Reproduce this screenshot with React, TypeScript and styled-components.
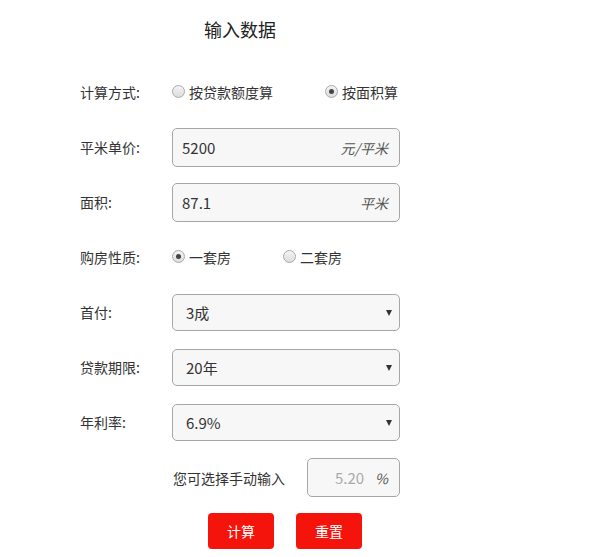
import styled, { createGlobalStyle } from 'styled-components'

const GlobalStyle = createGlobalStyle`
    body {
        margin: 0;
        background: #fff;
        font-family: "Noto Sans CJK SC", "Noto Sans", sans-serif;
        color: #333;
    }
`

const Page = styled.div`
    width: 320px;
    padding: 18px 0 0 80px;
`

const Title = styled.h2`
    margin: 0 0 31px;
    font-size: 18px;
    line-height: 22px;
    padding-bottom: 2px;
    font-weight: normal;
    text-align: center;
    color: #222;
`

const Form = styled.form`
    display: flex;
    flex-direction: column;
    gap: 16px;
`

const Row = styled.div`
    display: flex;
    align-items: center;
    height: 39px;
`

const Label = styled.div`
    flex-shrink: 0;
    width: 92px;
    font-size: 14px;
    line-height: 18px;
    padding-bottom: 2px;
    color: #333;
`

const Field = styled.div<{ $end?: boolean }>`
    display: flex;
    align-items: center;
    width: 228px;
    justify-content: ${p => (p.$end ? 'flex-end' : 'flex-start')};
    gap: ${p => (p.$end ? '22px' : '0')};
`

const RadioGroup = styled.div`
    display: flex;
    align-items: center;
    gap: 52px;
    white-space: nowrap;
`

const RadioOption = styled.label`
    display: flex;
    flex-shrink: 0;
    align-items: center;
    gap: 4px;
    font-size: 14px;
    line-height: 18px;
    padding-bottom: 2px;
    cursor: pointer;
`

const RadioDot = styled.span<{ $checked?: boolean }>`
    position: relative;
    flex-shrink: 0;
    width: 11px;
    height: 11px;
    border-radius: 50%;
    border: 1px solid #a9a9a9;
    background: linear-gradient(#f4f4f4, #dcdcdc);

    &::after {
        content: '';
        display: ${p => (p.$checked ? 'block' : 'none')};
        position: absolute;
        left: 3px;
        top: 3px;
        width: 5px;
        height: 5px;
        border-radius: 50%;
        background: #444;
    }
`

const InputBox = styled.div<{ $width?: number }>`
    display: flex;
    align-items: center;
    box-sizing: border-box;
    flex-shrink: 0;
    width: ${p => (p.$width ? `${p.$width}px` : '100%')};
    height: 39px;
    padding: 0 11px 0 9px;
    border: 1px solid #a6a6a6;
    border-radius: 5px;
    background: #f7f7f7;
`

const TextInput = styled.input<{ $right?: boolean }>`
    flex: 1;
    min-width: 0;
    border: none;
    outline: none;
    background: transparent;
    padding: 0;
    font-family: inherit;
    font-size: 15px;
    color: ${p => (p.$right ? '#aaa' : '#333')};
    text-align: ${p => (p.$right ? 'right' : 'left')};
`

const Unit = styled.span<{ $gap?: number }>`
    margin-left: ${p => p.$gap ?? 8}px;
    font-size: 14px;
    font-style: italic;
    color: #555;
`

const SelectWrap = styled.div`
    position: relative;
    width: 100%;
    height: 37px;
`

const Select = styled.select`
    appearance: none;
    box-sizing: border-box;
    width: 100%;
    height: 100%;
    padding: 0 28px 0 13px;
    border: 1px solid #a6a6a6;
    border-radius: 5px;
    background: #f7f7f7;
    font-family: inherit;
    font-size: 15px;
    color: #333;
    outline: none;
`

const Arrow = styled.span`
    position: absolute;
    right: 8px;
    top: 16px;
    width: 0;
    height: 0;
    border-left: 3.5px solid transparent;
    border-right: 3.5px solid transparent;
    border-top: 6px solid #333;
    pointer-events: none;
`

const Hint = styled.span`
    font-size: 14px;
    white-space: nowrap;
    color: #333;
`

const Buttons = styled.div`
    display: flex;
    gap: 22px;
    margin-left: 128px;
`

const Button = styled.button`
    width: 66px;
    height: 36px;
    border: none;
    border-radius: 4px;
    background: #f5140b;
    color: #fff;
    font-family: inherit;
    font-size: 14px;
    cursor: pointer;
`

const Radio = ({ text, checked }: { text: string; checked?: boolean }) => (
    <RadioOption>
        <RadioDot $checked={checked} />
        {text}
    </RadioOption>
)

const SelectField = ({ value, options }: { value: string; options: string[] }) => (
    <SelectWrap>
        <Select defaultValue={value}>
            {options.map(o => (
                <option key={o} value={o}>{o}</option>
            ))}
        </Select>
        <Arrow />
    </SelectWrap>
)

const App = () => {
    return (
        <Page>
            <GlobalStyle />
            <Title>输入数据</Title>
            <Form onSubmit={e => e.preventDefault()}>
                <Row>
                    <Label>计算方式:</Label>
                    <Field>
                        <RadioGroup>
                            <Radio text="按贷款额度算" />
                            <Radio text="按面积算" checked />
                        </RadioGroup>
                    </Field>
                </Row>
                <Row>
                    <Label>平米单价:</Label>
                    <Field>
                        <InputBox>
                            <TextInput defaultValue="5200" />
                            <Unit>元/平米</Unit>
                        </InputBox>
                    </Field>
                </Row>
                <Row>
                    <Label>面积:</Label>
                    <Field>
                        <InputBox>
                            <TextInput defaultValue="87.1" />
                            <Unit>平米</Unit>
                        </InputBox>
                    </Field>
                </Row>
                <Row>
                    <Label>购房性质:</Label>
                    <Field>
                        <RadioGroup>
                            <Radio text="一套房" checked />
                            <Radio text="二套房" />
                        </RadioGroup>
                    </Field>
                </Row>
                <Row>
                    <Label>首付:</Label>
                    <Field>
                        <SelectField value="3成" options={['2成', '3成', '4成', '5成']} />
                    </Field>
                </Row>
                <Row>
                    <Label>贷款期限:</Label>
                    <Field>
                        <SelectField value="20年" options={['10年', '15年', '20年', '30年']} />
                    </Field>
                </Row>
                <Row>
                    <Label>年利率:</Label>
                    <Field>
                        <SelectField value="6.9%" options={['4.9%', '5.88%', '6.9%']} />
                    </Field>
                </Row>
                <Row>
                    <Label />
                    <Field $end>
                        <Hint>您可选择手动输入</Hint>
                        <InputBox $width={93}>
                            <TextInput $right defaultValue="5.20" />
                            <Unit $gap={11}>%</Unit>
                        </InputBox>
                    </Field>
                </Row>
                <Buttons>
                    <Button type="submit">计算</Button>
                    <Button type="reset">重置</Button>
                </Buttons>
            </Form>
        </Page>
    )
}

export default App
